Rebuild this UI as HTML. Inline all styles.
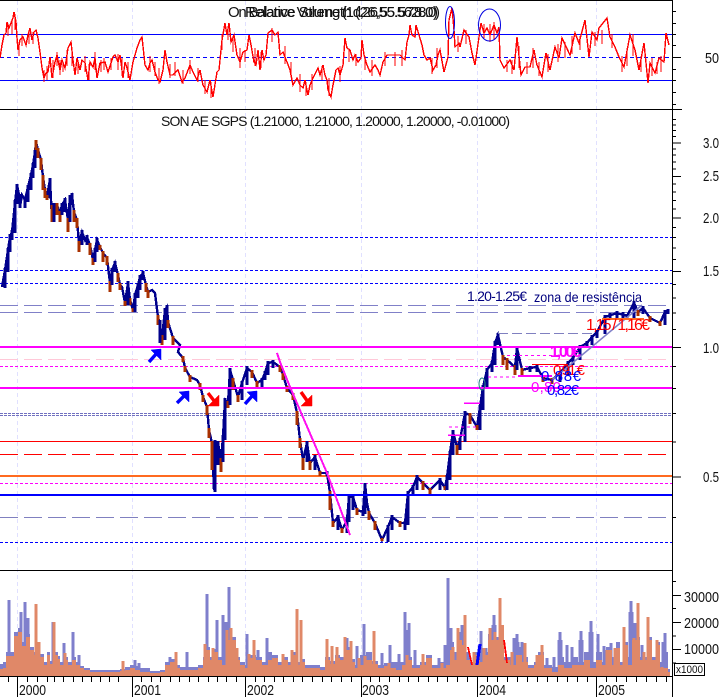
<!DOCTYPE html>
<html><head><meta charset="utf-8"><style>
html,body{margin:0;padding:0;background:#fff;width:724px;height:697px;overflow:hidden}
svg{display:block}
text{font-family:"Liberation Sans",sans-serif}
.c{shape-rendering:crispEdges}
</style></head><body>
<svg width="724" height="697" viewBox="0 0 724 697" xmlns="http://www.w3.org/2000/svg">
<rect width="724" height="697" fill="#fff"/>
<g class="c" stroke="#e0e0ff" stroke-width="1" stroke-dasharray="4 3" fill="none">
<path d="M17.5 1V676M132.5 1V676M245.5 1V676M361.5 1V676M477.5 1V676M596.5 1V676"/>
</g>
<g class="c" fill="none" stroke="#0000ff">
<path d="M0 34.5H672M0 80.5H672" stroke-width="1"/>
<path d="M0 57.5H672" stroke-width="1" stroke-dasharray="4 3"/>
</g>
<g class="c" fill="none" stroke="#ff0000" stroke-width="1.4">
<polyline points="0,58 2,45 4,35 6,33 7,22 9,28 11,23 13,18 14,12 16,22 17,38 18,50 20,40 23,37 26,45 28,35 30,28 32,40 34,32 36,30 38,38 40,52 42,68 44,78 46,73 48,72 50,57 52,78 55,62 57,55 60,70 62,60 65,68 68,48 71,42 73,60 75,75 77,58 80,70 82,60 85,63 88,80 90,62 93,67 95,58 97,78 100,63 105,62 108,72 113,57 115,55 118,62 120,55 123,78 125,62 127,68 130,80 133,62 137,48 140,40 142,37 145,65 148,70 150,63 152,60 155,72 158,80 160,82 163,70 165,50 167,62 170,75 173,75 178,70 182,82 185,78 190,65 193,72 197,80 200,70 203,85 207,92 210,80 213,97 217,72 219,70 222,40 225,23 227,35 229,23 231,42 234,35 237,55 240,62 243,52 247,50 249,35 251,45 254,62 256,65 258,50 260,70 262,50 264,60 266,55 268,33 272,30 275,35 278,32 280,55 283,52 287,62 290,70 293,85 297,78 300,85 303,88 305,80 308,95 310,85 313,78 318,68 320,75 323,65 325,75 327,80 328,90 331,97 333,85 336,70 338,68 340,75 343,65 345,38 347,48 350,50 353,60 355,55 358,62 361,58 362,40 364,55 367,65 370,72 375,65 378,70 380,75 383,62 387,55 392,55 400,55 405,60 407,42 409,35 410,25 412,35 415,37 416,25 419,35 422,45 424,55 427,60 430,58 433,70 436,65 438,55 440,50 444,72 448,57 449,20 452,8 454,30 455,47 459,43 460,47 464,30 469,37 472,53 475,65 479,37 481,23 484,33 487,28 490,35 494,25 497,33 499,27 500,60 504,68 510,60 514,70 517,37 521,75 525,67 530,67 534,50 537,65 542,77 546,53 550,70 555,47 559,58 562,38 570,55 575,33 579,43 585,20 589,57 592,32 597,40 599,28 607,18 610,37 615,47 619,57 624,67 630,35 635,50 639,70 644,43 648,83 650,63 655,73 659,58 664,62 666,33 669,45"/>
<path stroke-width="1.4" d="M8 26V36M12 20V34M15 14V30M19 42V56M22 34V46M29 30V44M33 32V44M44 70V82M47 66V80M53 60V78M57 52V66M60 60V75M63 62V72M67 50V66M72 48V66M78 60V74M85 56V72M89 64V80M95 52V70M101 60V72M104 58V70M111 58V70M118 54V70M122 58V76M128 62V78M150 56V72M155 62V76M159 68V84M170 64V78M175 62V76M183 70V84M190 60V74M198 68V82M205 80V94M211 82V98M222 34V50M228 26V40M233 36V52M240 48V68M245 50V62M255 48V66M261 52V68M272 28V42M285 46V64M291 62V76M300 74V92M306 82V96M312 74V90M322 66V80M329 78V96M340 66V82M349 50V62M356 54V66M365 56V70M372 60V76M385 52V66M395 52V66M402 50V66M432 58V74M437 48V68M458 36V52M466 30V44M484 24V38M490 24V42M494 22V40M507 60V72M512 60V74M519 46V68M527 62V74M533 48V68M539 62V76M548 54V72M558 44V62M565 42V58M572 36V54M580 36V50M595 32V46M602 30V44M612 34V48M622 56V72M627 48V66M633 34V56M641 56V72M652 58V76M657 62V74M661 56V72"/>
</g>
<ellipse cx="450" cy="22.5" rx="4.5" ry="16" fill="none" stroke="#0000e0" stroke-width="1"/>
<ellipse cx="489.5" cy="25" rx="11" ry="16" fill="none" stroke="#0000e0" stroke-width="1"/>
<text x="228" y="17" font-size="15" textLength="212" lengthAdjust="spacing" fill="#111">On Balance Volume (1d,26,55.5628.0)</text>
<text x="245" y="17" font-size="15" textLength="193" lengthAdjust="spacing" fill="#111">Relative Strength (26,55.578.0)</text>
<g class="c" fill="none">
<path d="M0 237.5H672M0 270.5H672M0 283.5H672M0 542.5H672" stroke="#0000ff" stroke-width="1" stroke-dasharray="3 2"/>
<path d="M0 305.5H667M0 312.5H667" stroke="#8080c8" stroke-width="1" stroke-dasharray="18 6"/>
<path d="M0 359.5H672" stroke="#ffc8d8" stroke-width="1" stroke-dasharray="18 6"/>
<path d="M0 366.5H672M0 483.5H672" stroke="#ff00ff" stroke-width="1" stroke-dasharray="3 2"/>
<path d="M0 413.5H672M0 415.5H672" stroke="#7070c0" stroke-width="1" stroke-dasharray="3 1"/>
<path d="M0 441.5H672" stroke="#ff0000" stroke-width="1"/>
<path d="M0 454.5H666" stroke="#ff0000" stroke-width="1" stroke-dasharray="18 6"/>
<path d="M0 517.5H667" stroke="#8080c0" stroke-width="1" stroke-dasharray="18 6"/>
<path d="M0 476H672" stroke="#ff6a20" stroke-width="2"/>
</g>
<g class="c" fill="none">
<polyline stroke="#00008c" stroke-width="2.4" points="2,287 5,270 8,250 10,237 12,232 15,203 17,185 19,195 20,207 22,195 25,200 28,187 31,175 33,165 35,152 36,142 38,150 41,160 43,177 45,190 47,197 49,185 50,180 52,220 54,205 57,205 60,213 62,205 65,200 68,220 70,197 72,195 74,212 77,220 79,243 82,232 85,240 87,237 90,245 93,260 95,250 97,240 100,247 103,253 107,258 110,283 112,270 115,263 118,275 120,285 122,287 125,303 128,283 130,300 133,310 135,295 138,285 140,277 143,273 146,285 148,292 152,290 155,293 158,317 160,325 162,337 165,310 167,307 168,322 173,338 180,345 178,352 183,358 185,368 190,377 197,380 200,385 203,397 207,407 209,430 212,443 214,490 215,467 218,443 221,460 223,437 225,400 228,403 230,370 233,380 238,397 242,383 247,368 252,372 257,383 262,380 265,373 268,363 273,362 280,367 283,375 287,388 293,395 297,413 300,440 303,460 307,443 310,463 315,457 320,473 327,473 330,493 333,523 338,517 342,530 347,520 349,497 353,497 357,510 363,512 365,483 367,503 369,513 375,523 382,540 388,527 392,517 400,523 405,523 408,493 413,487 417,477 423,483 430,490 440,480 445,488 447,477 450,453 453,432 457,447 460,440 465,413 470,415 477,427 480,407 483,387 487,370 492,363 495,343 498,335 503,357 507,360 515,367 517,348 522,370 530,368 537,367 543,378 552,380 560,373 568,363 573,358 580,347 587,343 592,337 597,332 605,317 617,313 627,316 634,303 638,312 643,308 650,318 660,323 665,312 668,311"/>
<path stroke="#a83000" stroke-width="3" d="M36 140V152M38 148V158M41 158V170M43 175V190M45 188V198M47 195V200M52 205V222M57 203V215M60 211V222M68 218V232M74 210V222M77 218V228M79 241V252M90 243V255M93 258V265M100 245V250M103 251V262M107 256V265M110 281V292M118 273V282M120 283V290M125 301V306M130 298V305M133 308V312M146 283V292M148 290V298M158 315V325M162 335V345M168 320V328M173 336V345M183 356V362M185 366V372M190 375V382M200 383V390M203 395V402M207 405V415M209 428V438M212 441V470M221 458V472M228 401V408M233 378V390M238 395V402M252 370V378M257 381V388M280 365V372M283 373V380M287 386V392M293 393V400M297 411V425M300 438V448M303 458V470M310 461V470M320 471V476M330 491V510M333 521V527M342 528V533M357 508V515M369 511V520M375 521V530M382 538V541M400 521V527M423 481V490M430 488V495M445 486V490M457 445V455M470 413V424M477 425V430M503 355V365M507 358V370M515 365V375M522 368V375M543 376V382M552 378V384M638 310V316M650 316V322M660 321V326"/>
<path stroke="#00008c" stroke-width="3" d="M5 268V288M8 248V272M10 234V252M12 230V240M15 200V233M17 184V204M20 194V208M25 198V208M28 185V202M31 173V190M33 163V178M35 150V168M50 178V198M54 203V222M62 203V215M65 198V212M70 195V222M72 193V205M82 230V245M87 235V245M95 248V262M97 238V252M112 268V285M115 261V272M128 281V305M135 293V312M138 283V298M140 275V290M143 271V280M160 320V343M165 308V340M167 305V315M215 440V492M218 441V465M223 435V462M225 398V440M230 368V405M242 381V400M247 366V385M262 378V388M265 371V380M268 361V375M273 360V368M307 441V462M315 455V470M327 471V476M338 515V530M347 518V533M349 495V522M353 495V510M363 510V516M365 483V514M388 525V542M392 515V530M405 521V530M408 491V525M413 485V495M417 475V490M440 478V490M447 475V490M450 451V480M453 430V455M460 438V450M465 411V442M480 405V430M483 385V410M487 368V388M492 361V372M495 341V365M498 333V345M517 346V370M530 366V372M537 365V372M560 371V382M568 361V375M573 356V365M580 345V360M587 341V348M592 335V345M597 330V338M605 315V334M610 313V320M617 311V318M623 312V318M627 314V318M634 301V318M643 306V314M665 310V325M668 309V314"/>
</g>
<path class="c" d="M0 347H672M0 388H672" stroke="#ff00ff" stroke-width="2" fill="none"/>
<path class="c" d="M0 495H672" stroke="#0000ff" stroke-width="2" fill="none"/>
<polyline class="c" points="277,353 280,362 290,387 327,473 350,535" fill="none" stroke="#ff10f0" stroke-width="2"/>
<path d="M552 380L642 305" stroke="#8080c8" stroke-width="1.6" fill="none"/>
<g class="c" fill="none">
<path d="M602 319H644" stroke="#ff6a20" stroke-width="2"/>
<path d="M498 333.5H593" stroke="#8080c0" stroke-width="1" stroke-dasharray="10 4"/>
<path d="M507 355.5H567M488 377H518M449 427H476" stroke="#ff00ff" stroke-width="1" stroke-dasharray="3 3"/>
<path d="M448 435H465M464 403H480" stroke="#ff00ff" stroke-width="1.5"/>
<path d="M518 376H552" stroke="#ff00ff" stroke-width="2"/>
<path d="M532 364.5H568" stroke="#ff0000" stroke-width="1"/>
</g>
<ellipse cx="482" cy="384" rx="3" ry="6" fill="none" stroke="#208080" stroke-width="1"/>
<g fill="#0000ff" stroke="#0000ff">
<path d="M149 362L157 353" stroke-width="3.4" fill="none"/><polygon points="161,349 161,360 151,350" stroke-width=".5"/>
<path d="M177 403L185 395" stroke-width="3.4" fill="none"/><polygon points="189,391 189,402 179,392" stroke-width=".5"/>
<path d="M245 404L253 395" stroke-width="3.4" fill="none"/><polygon points="257,391 257,402 247,392" stroke-width=".5"/>
</g>
<g fill="#ff0000" stroke="#ff0000">
<path d="M208 393L215 402" stroke-width="3.4" fill="none"/><polygon points="219,406 208,406 219,395" stroke-width=".5"/>
<path d="M301 392L308 402" stroke-width="3.4" fill="none"/><polygon points="312,406 301,406 312,395" stroke-width=".5"/>
</g>
<text x="467" y="301" font-size="14" textLength="60" fill="#00007f">1.20-1.25€</text>
<text x="534" y="302" font-size="14" textLength="108" lengthAdjust="spacingAndGlyphs" fill="#00007f">zona de resistência</text>
<text x="586" y="330" font-size="16" textLength="64" fill="#ff0000">1,15 / 1,16€</text>
<text x="550" y="357" font-size="16" font-weight="bold" textLength="31" fill="#ff00ff">1,00€</text>
<text x="553" y="375" font-size="15" textLength="32" fill="#ff0000">0,91 €</text>
<text x="541" y="381" font-size="15" textLength="40" fill="#0000ff">0,88€</text>
<text x="531" y="392" font-size="15" textLength="30" fill="#ff00ff">0,80</text>
<text x="547" y="395" font-size="15" textLength="32" fill="#0000ff">0,82€</text>
<text x="161" y="126" font-size="14" textLength="349" lengthAdjust="spacing" fill="#111">SON AE SGPS (1.21000, 1.21000, 1.20000, 1.20000, -0.01000)</text>
<g class="c">
<path fill="#7f7fcc" d="M0 676V664H3V662H6V652H12V652H14V632H18V628H22V642H26V634H30V647H34V652H40V654H44V662H47V652H50V661H54V652H58V656H60V662H64V657H68V662H72V657H76V662H80V666H84V668H90V670H120V669H125V667H130V665H135V666H140V668H150V671H160V670H165V662H170V659H175V665H180V667H190V667H198V665H203V657H206V647H210V657H213V649H218V657H222V662H227V637H232V637H236V657H240V662H245V665H250V655H256V657H262V662H268V652H272V655H278V662H282V657H288V662H292V652H296V662H300V659H305V665H312V665H320V667H325V657H330V661H335V655H340V657H345V647H350V659H355V665H360V655H366V652H372V661H378V665H384V663H390V662H396V662H402V662H408V657H412V665H420V662H426V655H432V665H440V662H446V657H450V642H454V652H458V637H462V642H466V652H470V662H474V652H480V659H484V652H488V634H492V632H496V637H500V627H504V657H510V657H516V647H522V657H528V665H534V662H538V652H544V665H552V667H558V657H564V662H572V657H578V662H584V652H590V662H596V652H602V662H606V647H612V657H616V642H620V662H624V642H628V657H632V634H636V637H640V657H644V657H648V637H652V657H656V642H660V662H664V652H668V669H670V676Z"/>
<path stroke="#7f7fcc" stroke-width="3" d="M9 676V600M21 676V612M25 676V602M28 676V618M53 676V622M64 676V643M73 676V632M79 676V655M135 676V660M139 676V663M170 676V657M187 676V652M207 676V594M217 676V620M223 676V615M226 676V622M229 676V587M247 676V634M258 676V650M267 676V638M347 676V638M357 676V646M364 676V624M382 676V653M390 676V645M399 676V654M405 676V612M409 676V623M415 676V650M425 676V663M439 676V658M448 676V578M451 676V628M462 676V625M481 676V631M486 676V648M494 676V615M509 676V657M514 676V638M517 676V634M522 676V642M537 676V655M547 676V658M554 676V657M560 676V632M567 676V645M572 676V647M581 676V631M591 676V621M598 676V634M604 676V646M611 676V643M631 676V601M635 676V623M642 676V645M649 676V642M665 676V633"/>
<path stroke="#7f7fcc" stroke-width="5" d="M408 676V630M446 676V645M462 676V632M494 676V625M517 676V642M560 676V640M581 676V640M591 676V632M631 676V612M664 676V642"/>
<path fill="#e08868" d="M0 676V669H3V668H6V656H14V636H18V632H22V646H26V637H30V650H34V655H40V657H44V665H47V655H50V664H54V655H58V659H60V665H64V660H68V665H72V660H76V665H80V668H84V670H90V672H120V671H125V670H130V668H135V670H140V672H150V673H160V672H165V665H170V662H175V668H180V670H198V668H203V660H206V650H210V660H213V652H218V660H222V665H227V640H236V660H240V665H245V668H250V658H256V660H262V665H268V660H272V658H278V665H282V660H288V665H292V655H296V665H300V662H305V668H320V670H325V660H330V664H335V658H340V660H345V650H350V662H355V668H360V665H366V660H372V664H378V668H384V666H390V668H396V670H402V665H408V660H412V668H420V665H426V658H432V668H446V665H450V650H454V660H458V640H462V645H466V660H470V665H474V655H480V662H484V655H488V640H500V625H504V660H510V665H516V655H522V662H528V668H534V665H538V655H544V668H552V672H558V665H564V668H572V665H584V660H590V668H596V660H602V665H606V650H612V665H616V648H620V665H624V645H628V665H632V640H640V660H648V640H652V660H656V645H660V668H668V672H670V676Z"/>
<path stroke="#e08868" stroke-width="3" d="M36 676V604M39 676V642M54 676V622M65 676V653M123 676V661M176 676V652M205 676V644M213 676V648M227 676V630M231 676V628M237 676V648M249 676V654M254 676V640M283 676V654M292 676V650M297 676V609M301 676V620M327 676V639M332 676V646M337 676V647M345 676V637M351 676V641M359 676V658M365 676V656M374 676V631M389 676V663M407 676V655M423 676V654M442 676V663M453 676V647M458 676V628M465 676V615M474 676V652M484 676V648M490 676V628M495 676V632M500 676V598M512 676V652M525 676V643M537 676V655M542 676V645M607 676V650M615 676V648M624 676V627M634 676V638M638 676V603M644 676V652M648 676V617M657 676V640M662 676V667"/>
</g>
<path class="c" d="M468 647L472 665M504 640L507 663" stroke="#ff0000" stroke-width="1.8" fill="none"/>
<path class="c" d="M477 665L480 644" stroke="#0000ff" stroke-width="3" fill="none"/>
<g class="c" fill="none" stroke="#000">
<path d="M0 .5H672M0 109.5H682M0 570.5H672M0 676.5H672" stroke-width="1"/>
<path d="M672.5 0V697" stroke-width="1"/>
<path stroke-width="1" d="M672 11.5H676M672 23.5H676M672 34.5H676M672 45.5H676M672 69.5H676M672 80.5H676M672 92.5H676M672 104.5H676M672 57.5H681
M672 119.5H676M672 125H676M672 130.5H676M672 136.5H676M672 149H676M672 155H676M672 162H676M672 169H676M672 184H676M672 192H676M672 200.5H676M672 209H676M672 227.5H676M672 237.5H676M672 248H676M672 259.5H676M672 284.5H676M672 298H676M672 313H676M672 329.5H676M672 366.5H676M672 388.5H676M672 413.5H676M672 442H676M672 517.5H676
M672 143H681M672 176.5H681M672 218H681M672 271.5H681M672 347.5H681M672 477H681
M672 581.5H676M672 608.5H676M672 636H676M672 663H676M672 595.5H681M672 622.5H681M672 649.5H681"/>
<path stroke-width="1" d="M17.5 676V697M132.5 676V697M245.5 676V697M361.5 676V697M477.5 676V697M596.5 676V697"/>
<path stroke-width="1" d="M8.5 676V682M27.5 676V682M37.5 676V682M47.5 676V682M54.5 676V682M63.5 676V682M73.5 676V682M82.5 676V682M91.5 676V682M100.5 676V682M109.5 676V682M118.5 676V682M141.5 676V682M151.5 676V682M160.5 676V682M170.5 676V682M179.5 676V682M189.5 676V682M198.5 676V682M208.5 676V682M217.5 676V682M226.5 676V682M236.5 676V682M255.5 676V682M264.5 676V682M274.5 676V682M283.5 676V682M293.5 676V682M302.5 676V682M312.5 676V682M322.5 676V682M331.5 676V682M341.5 676V682M351.5 676V682M370.5 676V682M379.5 676V682M389.5 676V682M399.5 676V682M408.5 676V682M418.5 676V682M428.5 676V682M437.5 676V682M447.5 676V682M457.5 676V682M467.5 676V682M487.5 676V682M497.5 676V682M507.5 676V682M517.5 676V682M527.5 676V682M537.5 676V682M547.5 676V682M557.5 676V682M567.5 676V682M577.5 676V682M587.5 676V682M606.5 676V682M616.5 676V682M626.5 676V682M636.5 676V682M646.5 676V682M656.5 676V682M666.5 676V682"/>
<rect x="674.5" y="663.5" width="30" height="12" stroke-width="1"/>
</g>
<g fill="#111" font-size="15">
<text x="19" y="695" textLength="27" lengthAdjust="spacingAndGlyphs">2000</text>
<text x="134" y="695" textLength="27" lengthAdjust="spacingAndGlyphs">2001</text>
<text x="247" y="695" textLength="27" lengthAdjust="spacingAndGlyphs">2002</text>
<text x="362" y="695" textLength="27" lengthAdjust="spacingAndGlyphs">2003</text>
<text x="479" y="695" textLength="27" lengthAdjust="spacingAndGlyphs">2004</text>
<text x="598" y="695" textLength="27" lengthAdjust="spacingAndGlyphs">2005</text>
<text x="705" y="63" textLength="14" lengthAdjust="spacingAndGlyphs">50</text>
<text x="703" y="148" textLength="16" lengthAdjust="spacingAndGlyphs">3.0</text>
<text x="703" y="181" textLength="16" lengthAdjust="spacingAndGlyphs">2.5</text>
<text x="703" y="223" textLength="16" lengthAdjust="spacingAndGlyphs">2.0</text>
<text x="703" y="276" textLength="16" lengthAdjust="spacingAndGlyphs">1.5</text>
<text x="703" y="353" textLength="16" lengthAdjust="spacingAndGlyphs">1.0</text>
<text x="703" y="482" textLength="16" lengthAdjust="spacingAndGlyphs">0.5</text>
<text x="684" y="602" textLength="35" lengthAdjust="spacingAndGlyphs">30000</text>
<text x="684" y="628" textLength="35" lengthAdjust="spacingAndGlyphs">20000</text>
<text x="684" y="654" textLength="35" lengthAdjust="spacingAndGlyphs">10000</text>
<text x="676" y="673" font-size="11" textLength="27" lengthAdjust="spacingAndGlyphs">x1000</text>
</g>
</svg>
</body></html>
